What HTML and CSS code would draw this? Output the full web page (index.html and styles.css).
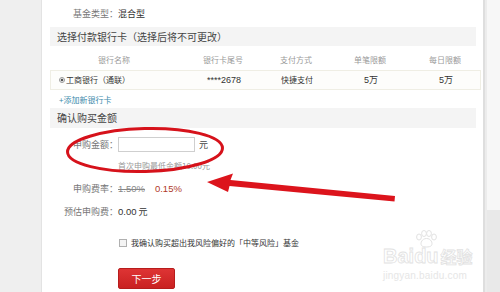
FILE: index.html
```html
<!DOCTYPE html>
<html lang="zh-CN">
<head>
<meta charset="utf-8">
<title>确认购买金额</title>
<link rel="stylesheet" href="styles.css">
</head>
<body>
<div class="page">
  <div class="gutter"></div>
  <main class="panel">
    <div class="fund-type"><span class="lbl">基金类型：</span><span class="val">混合型</span></div>
    <div class="sec-head">选择付款银行卡（选择后将不可更改）</div>
    <div class="bank-table">
      <div class="thead">
        <span>银行名称</span><span>银行卡尾号</span><span>支付方式</span><span>单笔限额</span><span>每日限额</span>
      </div>
      <div class="trow">
        <span class="bank"><i class="radio"></i>工商银行（通联）</span><span class="num">****2678</span><span>快捷支付</span><span class="num">5万</span><span class="num">5万</span>
      </div>
    </div>
    <div class="add-card">+添加新银行卡</div>
    <div class="sec-head sec-head-2">确认购买金额</div>
    <div class="form">
      <div class="frow amount"><span class="flbl">申购金额：</span><span class="fval"><span class="amt"></span><span class="unit">元</span></span></div>
      <div class="frow hint"><span></span><span class="hint-text">首次申购最低金额10.00元</span></div>
      <div class="frow rate"><span class="flbl">申购费率：</span><span class="fval"><s class="old">1.50%</s><span class="new">0.15%</span></span></div>
      <div class="frow fee"><span class="flbl">预估申购费：</span><span class="fval"><span class="num-d">0.00</span> 元</span></div>
      <div class="frow agree"><span></span><span class="fval"><i class="check"></i>我确认购买超出我风险偏好的「中等风险」基金</span></div>
      <div class="frow submit"><span></span><span class="fval"><span class="btn">下一步</span></span></div>
    </div>
  </main>
  <div class="scroll"><div class="thumb"></div><div class="track"></div></div>
</div>

<div class="watermark">
  <div class="wm-logo"><span>Bai</span><span class="du">du<svg class="paw" viewBox="0 0 22 18" width="22" height="18"><ellipse cx="4" cy="7" rx="2.4" ry="3"/><ellipse cx="9" cy="3.5" rx="2.4" ry="3"/><ellipse cx="14" cy="3.5" rx="2.4" ry="3"/><ellipse cx="19" cy="7" rx="2.4" ry="3"/><path d="M11.5 8.5 C7 8.5 5 13 6.5 15.5 C8 17.5 15 17.5 16.5 15.5 C18 13 16 8.5 11.5 8.5 Z"/></svg></span><span class="jy">经验</span></div>
  <div class="wm-url">jingyan.baidu.com</div>
</div>

<svg class="annot" width="500" height="292" viewBox="0 0 500 292">
  <ellipse cx="145" cy="150" rx="77.5" ry="21.5" transform="rotate(-1.5 145 150)" fill="none" stroke="#d6121b" stroke-width="3"/>
  <polygon points="207,182 233,173.5 230.5,180 395,196 394.5,201.5 229.5,186 228,192" fill="#dc141c"/>
</svg>
</body>
</html>
```

FILE: styles.css
```css
* { box-sizing: border-box; }
html, body { margin: 0; padding: 0; }
body {
  width: 500px;
  height: 292px;
  overflow: hidden;
  background: #efefef;
  font-family: "Noto Sans CJK SC", "Liberation Sans", sans-serif;
  color: #444;
  position: relative;
}
.page {
  display: flex;
  height: 292px;
}
.gutter {
  width: 42px;
  flex: none;
  background: #efefef;
  border-right: 1px solid #e3e3e3;
}
.panel {
  width: 441px;
  flex: none;
  background: #fff;
  padding: 0 7px 0 8px;
}
.fund-type {
  height: 27px;
  line-height: 27px;
  padding-left: 23px;
  font-size: 9px;
}
.fund-type .lbl { color: #777; }
.fund-type .val { color: #333; }
.sec-head {
  height: 19px;
  line-height: 19px;
  background: #f4f4f4;
  padding-left: 7px;
  font-size: 10px;
  color: #444;
}
.sec-head-2 { height: 20px; line-height: 20px; }
.bank-table {
  margin-right: -5px;
  font-size: 8px;
}
.thead, .trow {
  display: grid;
  grid-template-columns: 128px 90px 56px 92px 58px 1fr;
  text-align: center;
}
.thead {
  height: 24px;
  padding-top: 4px;
  line-height: 20px;
  color: #9a9a9a;
}
.trow {
  height: 20px;
  line-height: 18px;
  border: 1px solid #efeee4;
  background: #fdfdfb;
  color: #333;
}
.trow .bank {
  text-align: left;
  padding-left: 8px;
  display: flex;
  align-items: center;
}
.trow .num { font-family: "Liberation Sans", "Noto Sans CJK SC", sans-serif; font-size: 9px; }
.radio {
  display: inline-block;
  width: 6px;
  height: 6px;
  border: 1px solid #999;
  border-radius: 50%;
  background: radial-gradient(circle, #555 0 1.5px, #fff 1.6px);
  margin-right: 1px;
}
.add-card {
  height: 18px;
  padding-top: 2px;
  line-height: 16px;
  padding-left: 9px;
  font-size: 8px;
  color: #3d8aab;
}
.form {
  padding-top: 9px;
  font-size: 9px;
}
.frow {
  display: grid;
  grid-template-columns: 68px 300px;
  align-items: center;
}
.flbl {
  text-align: right;
  color: #777;
}
.fval { display: flex; align-items: center; color: #333; }
.amount { height: 15px; }
.amt {
  display: block;
  flex: none;
  width: 77px;
  height: 15px;
  border: 1px solid #cfcfcf;
  background: #fff;
}
.unit { margin-left: 4px; color: #444; }
.hint { margin-top: 8px; line-height: 12px; }
.hint-text { font-size: 8px; color: #999; }
.rate { margin-top: 10px; line-height: 14px; }
.old {
  font-family: "Liberation Sans", sans-serif;
  font-size: 9.5px;
  color: #888;
}
.new {
  font-family: "Liberation Sans", sans-serif;
  font-size: 9.5px;
  color: #b0392b;
  margin-left: 10px;
}
.fee { margin-top: 9px; line-height: 14px; }
.num-d { font-family: "Liberation Sans", sans-serif; font-size: 9.5px; margin-right: 2px; }
.agree { margin-top: 17px; line-height: 14px; font-size: 8px; }
.agree .fval { color: #333; }
.check {
  display: inline-block;
  width: 8px;
  height: 8px;
  border: 1px solid #b0b0b0;
  background: #f4f4f4;
  margin: 0 4px 0 1px;
}
.submit { margin-top: 18px; }
.btn {
  display: inline-block;
  width: 57px;
  height: 21px;
  line-height: 19px;
  text-align: center;
  color: #fff;
  font-size: 10px;
  background: linear-gradient(#de3434, #c92121);
  border: 1px solid #b71c1c;
  border-radius: 2px;
}
.scroll {
  width: 17px;
  flex: none;
  display: flex;
  flex-direction: column;
  border-left: 2px solid #dedede;
  background: #f6f6f6;
}
.thumb {
  height: 210px;
  border-left: 2px solid #ececec;
  background: #f7f7f7;
}
.track {
  flex: 1;
  border-left: 2px solid #ececec;
  background: #e9e9e9;
}
.watermark {
  position: absolute;
  left: 383px;
  top: 238px;
  width: 92px;
  pointer-events: none;
}
.wm-logo {
  display: flex;
  align-items: flex-end;
  height: 28px;
  font-family: "Liberation Sans", "Noto Sans CJK SC", sans-serif;
  font-weight: bold;
  font-size: 20px;
  line-height: 20px;
  color: #fff;
  -webkit-text-stroke: 0.8px #e2e2e2;
}
.wm-logo .du { position: relative; }
.paw {
  position: absolute;
  left: 1px;
  top: -16px;
  fill: #fff;
  stroke: #e2e2e2;
  stroke-width: 1;
}
.wm-logo .jy {
  font-family: "Noto Sans CJK SC", sans-serif;
  font-size: 16px;
  margin-left: 2px;
}
.wm-url {
  margin-top: 4px;
  font-family: "Liberation Sans", sans-serif;
  font-size: 10px;
  color: #e6e6e6;
  letter-spacing: 0.2px;
}
.annot {
  position: absolute;
  left: 0;
  top: 0;
  pointer-events: none;
}
```
